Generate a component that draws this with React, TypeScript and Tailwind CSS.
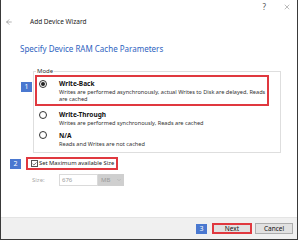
import { ArrowLeft, X, ChevronDown, Check } from "lucide-react";

const Badge = ({ n }: { n: string }) => (
  <div className="w-[11px] h-[10px] bg-[#4a78d0] text-white text-[7px] leading-[10px] text-center">
    {n}
  </div>
);

const Radio = ({ checked }: { checked?: boolean }) => (
  <div className="w-[8px] h-[8px] rounded-full border border-[#333] bg-white flex items-center justify-center shrink-0">
    {checked && <div className="w-[4px] h-[4px] rounded-full bg-[#222]" />}
  </div>
);

const Option = ({
  title,
  desc,
  checked,
}: {
  title: string;
  desc: string;
  checked?: boolean;
}) => (
  <div className="flex">
    <div className="w-[19px] pl-[2px] h-[7px] flex items-center">
      <Radio checked={checked} />
    </div>
    <div className="flex-1 pl-[3px]">
      <div className="text-[6.5px] leading-[7px] font-bold text-[#111]">{title}</div>
      <div className="text-[5.6px] leading-[6.5px] text-[#333] mt-[2px]">{desc}</div>
    </div>
  </div>
);

export default function App() {
  return (
    <div className="w-[300px] h-[241px] bg-white font-['Noto_Sans',sans-serif]">
      <div className="w-[298px] h-[240px] border-l border-r border-b border-[#3a3a3a] flex flex-col">
        {/* title bar */}
        <div className="h-[14px] flex items-center justify-end pr-[6px] gap-[17px] text-[#555]">
          <span className="text-[8px] leading-none">?</span>
          <X className="w-[8px] h-[8px]" strokeWidth={1.2} />
        </div>
        <div className="h-[16px] flex items-center">
          <ArrowLeft className="w-[8px] h-[8px] ml-[4px] text-[#666]" strokeWidth={1.5} />
          <span className="ml-[17px] text-[6.5px] text-[#222]">Add Device Wizard</span>
        </div>

        <div className="mt-[14px] ml-[19px] text-[8px] leading-[10px] text-[#2e63c0]">
          Specify Device RAM Cache Parameters
        </div>

        {/* mode group */}
        <div className="flex mt-[14px] ml-[20px]">
          <div className="w-[12px] pt-[14px]">
            <Badge n="1" />
          </div>
          <fieldset className="w-[248px] border border-[#dedede] pl-[1px] pr-[11px] pb-[5px]">
            <legend className="ml-[1px] px-[1px] text-[6px] leading-[7px] text-[#333]">Mode</legend>
            <div className="border-2 border-[#e0383f] pt-[3px] pb-[2px]">
              <Option
                checked
                title="Write-Back"
                desc="Writes are performed asynchronously, actual Writes to Disk are delayed, Reads are cached"
              />
            </div>
            <div className="mt-[5px] pl-[2px]">
              <Option
                title="Write-Through"
                desc="Writes are performed synchronously, Reads are cached"
              />
            </div>
            <div className="mt-[5px] pl-[2px]">
              <Option title="N/A" desc="Reads and Writes are not cached" />
            </div>
          </fieldset>
        </div>

        {/* max size */}
        <div className="flex items-center mt-[4px] ml-[9px]">
          <Badge n="2" />
          <div className="ml-[5px] w-[92px] h-[13px] border-2 border-[#e0383f] flex items-center pl-[3px] whitespace-nowrap">
            <div className="w-[7px] h-[7px] border border-[#555] flex items-center justify-center shrink-0">
              <Check className="w-[6px] h-[6px] text-[#222]" strokeWidth={3} />
            </div>
            <span className="ml-[1px] text-[5.8px] text-[#222]">Set Maximum available Size</span>
          </div>
        </div>
        <div className="flex items-center mt-[4px] ml-[31px]">
          <span className="w-[27px] text-[6px] text-[#aaa]">Size:</span>
          <div className="w-[39px] h-[12px] border border-[#dadada] text-[6px] text-[#999] pl-[2px] flex items-center">
            676
          </div>
          <div className="w-[26px] h-[12px] bg-[#cfcfcf] flex items-center justify-between pl-[3px] pr-[2px] text-[6px] text-[#999]">
            MB
            <ChevronDown className="w-[6px] h-[6px] text-[#aaa]" />
          </div>
        </div>

        {/* footer */}
        <div className="mt-auto h-[22px] bg-[#f0f0f0] border-t border-[#e4e4e4] flex items-center justify-end pr-[4px]">
          <Badge n="3" />
          <div className="ml-[5px] w-[40px] h-[11px] border-2 border-[#e0383f] bg-[#e1e1e1] flex items-center justify-center text-[6.5px] text-[#111]">
            Next
          </div>
          <div className="ml-[3px] w-[38px] h-[11px] border border-[#adadad] bg-[#e1e1e1] flex items-center justify-center text-[6.5px] text-[#111]">
            Cancel
          </div>
        </div>
      </div>
    </div>
  );
}
